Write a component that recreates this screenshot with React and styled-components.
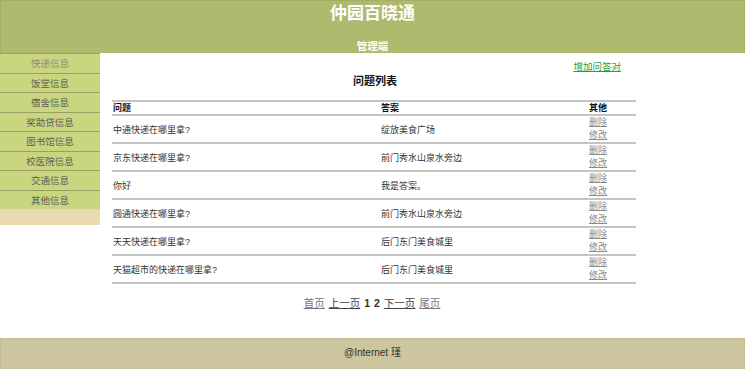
import * as React from 'react';
import styled, { createGlobalStyle } from 'styled-components';

const HEADER_BG = '#afba6f';
const MENU_BG = '#c9d67f';
const MENU_LINE = '#98a064';
const TAN = '#e9dbb0';
const FOOTER_BG = '#ccc59d';
const LINE = '#c4c4c4';

const menuItems = ['快递信息', '饭堂信息', '宿舍信息', '奖助贷信息', '图书馆信息', '校医院信息', '交通信息', '其他信息'];

const rows = [
    { question: '中通快递在哪里拿?', answer: '绽放美食广场' },
    { question: '京东快递在哪里拿?', answer: '前门秀水山泉水旁边' },
    { question: '你好', answer: '我是答案。' },
    { question: '圆通快递在哪里拿?', answer: '前门秀水山泉水旁边' },
    { question: '天天快递在哪里拿?', answer: '后门东门美食城里' },
    { question: '天猫超市的快递在哪里拿?', answer: '后门东门美食城里' },
];

const GlobalStyle = createGlobalStyle`
    html, body {
        margin: 0;
        padding: 0;
        background: #ffffff;
        font-family: "Liberation Sans", "Noto Sans CJK SC", sans-serif;
    }
`;

export default function App() {
    return (
        <Page>
            <GlobalStyle />
            <Header>
                <Title>仲园百晓通</Title>
                <SubTitle>管理端</SubTitle>
            </Header>
            <Body>
                <Menu>
                    {menuItems.map((item, i) => (
                        <MenuItem key={item} active={i === 0}>{item}</MenuItem>
                    ))}
                </Menu>
                <Main>
                    <AddRow><AddLink href="#">增加问答对</AddLink></AddRow>
                    <ListTitle>问题列表</ListTitle>
                    <Table>
                        <colgroup>
                            <col style={{ width: 268 }} />
                            <col style={{ width: 208 }} />
                            <col />
                        </colgroup>
                        <thead>
                            <tr>
                                <Th>问题</Th>
                                <Th>答案</Th>
                                <Th>其他</Th>
                            </tr>
                        </thead>
                        <tbody>
                            {rows.map((row, i) => (
                                <tr key={i}>
                                    <Td>{row.question}</Td>
                                    <Td>{row.answer}</Td>
                                    <Td>
                                        <OpLink href="#">删除</OpLink>
                                        <OpLink href="#">修改</OpLink>
                                    </Td>
                                </tr>
                            ))}
                        </tbody>
                    </Table>
                    <Pager>
                        <PageLink href="#" light>首页</PageLink>
                        <PageLink href="#">上一页</PageLink>
                        <PageNum>1</PageNum>
                        <PageNum>2</PageNum>
                        <PageLink href="#">下一页</PageLink>
                        <PageLink href="#" light>尾页</PageLink>
                    </Pager>
                </Main>
            </Body>
            <Footer>@Internet 瑾</Footer>
        </Page>
    );
}

const Page = styled.div`
    width: 745px;
    min-height: 369px;
    display: flex;
    flex-direction: column;
`;

const Header = styled.header`
    height: 53px;
    box-sizing: border-box;
    background-color: ${HEADER_BG};
    border: 1px solid #a4af64;
    border-bottom: none;
    color: #ffffff;
    text-align: center;
`;

const Title = styled.h1`
    margin: 0;
    font-size: 17px;
    line-height: 26px;
    font-weight: bold;
`;

const SubTitle = styled.div`
    margin-top: 13px;
    font-size: 10.5px;
    line-height: 13px;
    font-weight: bold;
`;

const Body = styled.div`
    display: flex;
    flex: 1;
    align-items: flex-start;
`;

const Menu = styled.ul`
    width: 100px;
    margin: 0;
    padding: 0 0 16px;
    list-style: none;
    background-color: ${TAN};
`;

const MenuItem = styled.li`
    height: 19.5px;
    line-height: 20px;
    box-sizing: border-box;
    border-top: 1px solid ${MENU_LINE};
    background-color: ${MENU_BG};
    text-align: center;
    font-size: 9.5px;
    color: ${props => props.active ? '#8c8c7a' : '#5e5e55'};
`;

const Main = styled.main`
    width: 550px;
    padding-top: 7px;
`;

const AddRow = styled.div`
    text-align: right;
    padding-right: 29px;
    font-size: 9.5px;
    line-height: 13px;
`;

const AddLink = styled.a`
    color: #22a046;
    text-decoration: underline;
`;

const ListTitle = styled.h2`
    margin: 0;
    text-align: center;
    font-size: 11px;
    line-height: 16px;
    font-weight: bold;
    color: #111;
`;

const Table = styled.table`
    width: 524px;
    table-layout: fixed;
    margin: 11px 0 0 12px;
    border-collapse: collapse;
    border-top: 2px solid ${LINE};
    font-size: 9px;
    color: #333;

    tr {
        border-bottom: 2px solid ${LINE};
    }
`;

const Th = styled.th`
    padding: 0 1px;
    height: 12px;
    line-height: 12px;
    text-align: left;
    font-weight: bold;
    color: #111;
`;

const Td = styled.td`
    padding: 0 1px;
    height: 26px;
    vertical-align: middle;
    white-space: nowrap;
`;

const OpLink = styled.a`
    display: block;
    line-height: 13px;
    color: #8a8a8a;
    text-decoration: underline;
`;

const Pager = styled.div`
    margin-top: 12px;
    padding-right: 6px;
    text-align: center;
    font-size: 10.5px;
    line-height: 14px;
`;

const PageLink = styled.a`
    margin: 0 2px;
    color: ${props => props.light ? '#777' : '#444'};
    text-decoration: underline;
`;

const PageNum = styled.span`
    margin: 0 2px;
    color: #333;
    font-weight: bold;
`;

const Footer = styled.footer`
    height: 32px;
    box-sizing: border-box;
    margin-top: 28px;
    background-color: ${FOOTER_BG};
    border: 1px solid #c4bd93;
    line-height: 28px;
    text-align: center;
    font-size: 10px;
    color: #333;
`;
